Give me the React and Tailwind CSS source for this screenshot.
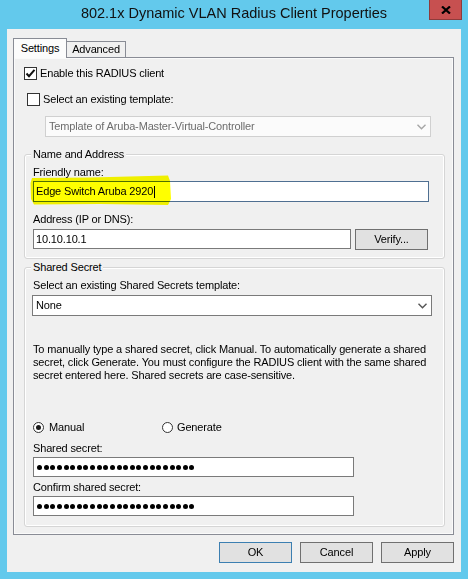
import React from "react";

const font = { fontFamily: '"Liberation Sans", Arial, sans-serif' };

function Check({ checked }) {
  return (
    <div className="w-[13px] h-[13px] border border-[#333333] bg-white flex items-center justify-center shrink-0">
      {checked && (
        <svg width="11" height="11" viewBox="0 0 11 11">
          <path d="M1.5 5.5 L4 8.2 L9.5 1.8" fill="none" stroke="#111" strokeWidth="2" />
        </svg>
      )}
    </div>
  );
}

function Radio({ checked }) {
  return (
    <div className="w-[11px] h-[11px] rounded-full border border-[#333333] bg-white flex items-center justify-center shrink-0">
      {checked && <div className="w-[5px] h-[5px] rounded-full bg-[#1a1a1a]" />}
    </div>
  );
}

function Chevron({ color }) {
  return (
    <svg width="9" height="6" viewBox="0 0 9 6">
      <path d="M0.5 0.8 L4.5 4.8 L8.5 0.8" fill="none" stroke={color} strokeWidth="1.4" />
    </svg>
  );
}

function Dots() {
  return (
    <div className="flex items-center gap-[1.64px] pl-[3px]">
      {Array.from({ length: 24 }).map((_, i) => (
        <div key={i} className="w-[5px] h-[5px] rounded-full bg-black" />
      ))}
    </div>
  );
}

function Group({ label, className, children }) {
  return (
    <div className={"relative ml-[10px] w-[421px] border border-[#d5d5d5] rounded-[3px] shadow-[inset_0_0_0_1px_#ffffff] " + className}>
      <div className="absolute -top-[7px] left-[6px] px-[2px] bg-[#f0f0f0] leading-[13px]">{label}</div>
      {children}
    </div>
  );
}

function Button({ children, primary }) {
  return (
    <div
      className={
        "w-[73px] h-[21px] flex items-center justify-center bg-[#e1e1e1] border " +
        (primary ? "border-[#3c7fb1]" : "border-[#707070]")
      }
    >
      {children}
    </div>
  );
}

export default function App() {
  return (
    <div className="w-[468px] h-[579px] bg-[#63c9ec] flex flex-col text-[11px] text-black tracking-[-0.15px]" style={font}>
      <div className="relative h-[29px] flex items-center justify-center">
        <div className="text-[14.5px] tracking-normal text-[#111] pb-[1px]">802.1x Dynamic VLAN Radius Client Properties</div>
        <div className="absolute top-0 right-[6px] w-[33px] h-[20px] bg-[#c75050] border border-[#8e3b3b] border-t-0 flex items-center justify-center">
          <svg width="10" height="8" viewBox="0 0 10 8">
            <path d="M1 0.5 L9 7.5 M9 0.5 L1 7.5" stroke="#000" strokeWidth="2.2" />
          </svg>
        </div>
      </div>

      <div className="ml-[7px] w-[454px] h-[543px] bg-[#f0f0f0] flex flex-col">
        <div className="mt-[9px] ml-[6px] flex items-end h-[19px]">
          <div className="relative z-10 -mb-px h-[20px] w-[54px] bg-[#fcfcfc] border border-b-0 border-[#898c95] flex items-center justify-center">
            Settings
          </div>
          <div className="h-[16px] w-[59px] bg-[#f0f0f0] border border-l-0 border-b-0 border-[#898c95] flex items-center justify-center">
            Advanced
          </div>
        </div>

        <div className="ml-[6px] w-[441px] h-[478px] border border-[#898c95] shadow-[inset_0_0_0_1px_#fafafa] flex flex-col">
          <div className="ml-[10px] mt-[9px] flex items-center gap-[3px] h-[13px]">
            <Check checked />
            <span>Enable this RADIUS client</span>
          </div>
          <div className="ml-[13px] mt-[13px] flex items-center gap-[3px] h-[13px]">
            <Check />
            <span>Select an existing template:</span>
          </div>
          <div className="ml-[31px] mt-[10px] w-[386px] h-[21px] border border-[#d0d0d0] bg-[#fbfbfb] flex items-center justify-between pl-[3px] pr-[4px] text-[#6d6d6d]">
            <span>Template of Aruba-Master-Virtual-Controller</span>
            <Chevron color="#a6a6a6" />
          </div>

          <Group label="Name and Address" className="mt-[17px] h-[105px]">
            <div className="ml-[8px] mt-[11px] leading-[13px]">Friendly name:</div>
            <div className="relative ml-[8px] mt-[2px] w-[396px] h-[21px] border border-[#4f6f91] bg-white flex items-center pl-[2px]">
              <span>Edge Switch Aruba 2920</span>
              <div className="w-px h-[12px] bg-black ml-[1px]" />
              <svg className="absolute -left-[4px] -top-[7px] mix-blend-multiply" width="142" height="31" viewBox="0 0 142 31">
                <path d="M2 3 L60 2.5 L138 0.5 L140 6 L141 24 L138 30 L70 29 L4 29.5 L1 24 L0.5 8 Z" fill="#ffff00" />
              </svg>
            </div>
            <div className="ml-[8px] mt-[11px] leading-[13px]">Address (IP or DNS):</div>
            <div className="ml-[8px] mt-[3px] flex gap-[4px]">
              <div className="w-[318px] h-[20px] border border-[#7a7a7a] bg-white flex items-center pl-[2px]">10.10.10.1</div>
              <Button>Verify...</Button>
            </div>
          </Group>

          <Group label="Shared Secret" className="mt-[8px] h-[260px]">
            <div className="ml-[8px] mt-[11px] leading-[13px]">Select an existing Shared Secrets template:</div>
            <div className="ml-[7px] mt-[3px] w-[400px] h-[21px] border border-[#7a7a7a] bg-white flex items-center justify-between pl-[3px] pr-[4px]">
              <span>None</span>
              <Chevron color="#555555" />
            </div>
            <div className="ml-[8px] mt-[27px] leading-[13px]">
              To manually type a shared secret, click Manual. To automatically generate a shared
              <br />
              secret, click Generate. You must configure the RADIUS client with the same shared
              <br />
              secret entered here. Shared secrets are case-sensitive.
            </div>
            <div className="ml-[8px] mt-[39px] flex items-center h-[13px]">
              <div className="w-[129px] flex items-center gap-[5px]">
                <Radio checked />
                <span>Manual</span>
              </div>
              <div className="flex items-center gap-[4px]">
                <Radio />
                <span>Generate</span>
              </div>
            </div>
            <div className="ml-[8px] mt-[8px] leading-[13px]">Shared secret:</div>
            <div className="ml-[8px] mt-[2px] w-[321px] h-[20px] border border-[#7a7a7a] bg-white flex items-center">
              <Dots />
            </div>
            <div className="ml-[8px] mt-[4px] leading-[13px]">Confirm shared secret:</div>
            <div className="ml-[8px] mt-[2px] w-[321px] h-[20px] border border-[#7a7a7a] bg-white flex items-center">
              <Dots />
            </div>
          </Group>
        </div>

        <div className="mt-[7px] mr-[7px] flex justify-end gap-[8px]">
          <Button primary>OK</Button>
          <Button>Cancel</Button>
          <Button>Apply</Button>
        </div>
      </div>
    </div>
  );
}
